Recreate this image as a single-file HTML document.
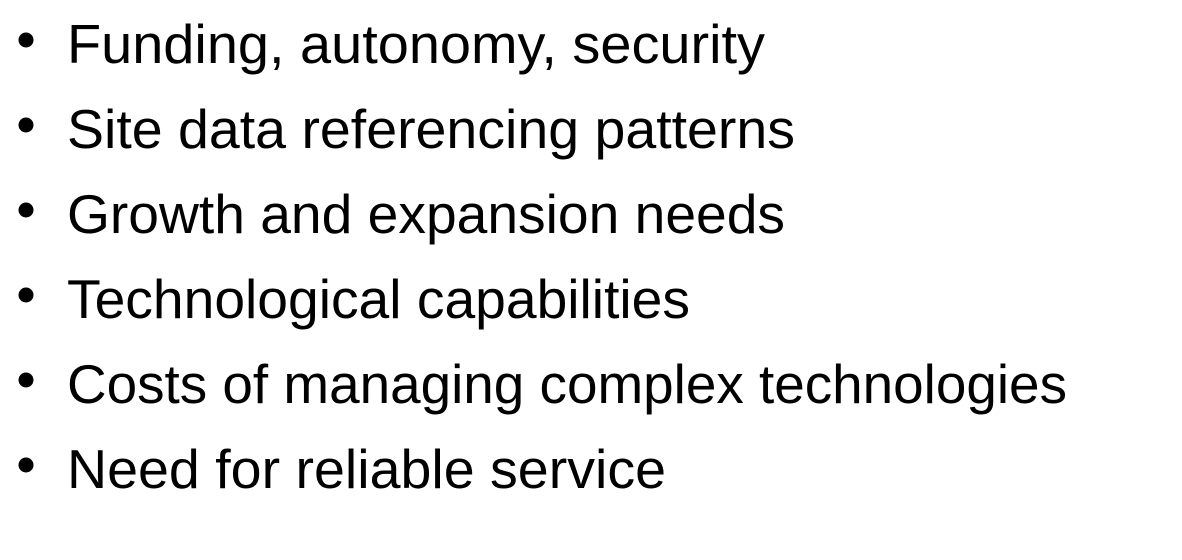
<!DOCTYPE html>
<html><head><style>html,body{margin:0;padding:0;background:#fff;width:1182px;height:560px;overflow:hidden}</style></head>
<body>
<svg width="1182" height="560" xmlns="http://www.w3.org/2000/svg" font-family="Liberation Sans, sans-serif" font-size="55" fill="#000">
<g>
<circle cx="26" cy="40" r="7.5"/>
<circle cx="26" cy="125" r="7.5"/>
<circle cx="26" cy="210" r="7.5"/>
<circle cx="26" cy="295" r="7.5"/>
<circle cx="26" cy="380" r="7.5"/>
<circle cx="26" cy="465" r="7.5"/>
</g>
<text x="67" y="63" textLength="698" lengthAdjust="spacingAndGlyphs">Funding, autonomy, security</text>
<text x="67" y="148" textLength="728" lengthAdjust="spacingAndGlyphs">Site data referencing patterns</text>
<text x="67" y="233" textLength="718" lengthAdjust="spacingAndGlyphs">Growth and expansion needs</text>
<text x="67" y="318" textLength="623" lengthAdjust="spacingAndGlyphs">Technological capabilities</text>
<text x="67" y="403" textLength="1000" lengthAdjust="spacingAndGlyphs">Costs of managing complex technologies</text>
<text x="67" y="488" textLength="599" lengthAdjust="spacingAndGlyphs">Need for reliable service</text>
</svg>
</body></html>
